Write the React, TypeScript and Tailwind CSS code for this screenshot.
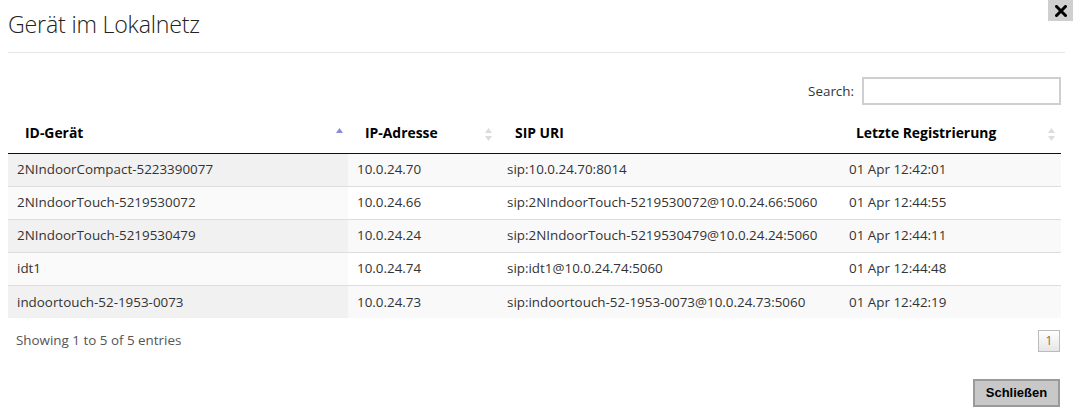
import React from "react";

const rows = [
  ["2NIndoorCompact-5223390077", "10.0.24.70", "sip:10.0.24.70:8014", "01 Apr 12:42:01"],
  ["2NIndoorTouch-5219530072", "10.0.24.66", "sip:2NIndoorTouch-5219530072@10.0.24.66:5060", "01 Apr 12:44:55"],
  ["2NIndoorTouch-5219530479", "10.0.24.24", "sip:2NIndoorTouch-5219530479@10.0.24.24:5060", "01 Apr 12:44:11"],
  ["idt1", "10.0.24.74", "sip:idt1@10.0.24.74:5060", "01 Apr 12:44:48"],
  ["indoortouch-52-1953-0073", "10.0.24.73", "sip:indoortouch-52-1953-0073@10.0.24.73:5060", "01 Apr 12:42:19"],
];

function SortBoth() {
  return (
    <svg width="7" height="13" viewBox="0 0 7 13" className="absolute right-[6px] top-[13px]">
      <path d="M3.5 0 L7 5 L0 5 Z" fill="#dcdcdc" />
      <path d="M3.5 13 L7 8 L0 8 Z" fill="#dcdcdc" />
    </svg>
  );
}

function SortAsc() {
  return (
    <svg width="7" height="13" viewBox="0 0 7 13" className="absolute right-[5px] top-[13px]">
      <path d="M3.5 0 L7 5 L0 5 Z" fill="#8a8ad6" />
    </svg>
  );
}

export default function App() {
  return (
    <div
      className="relative w-[1073px] h-[410px] bg-white text-[#333]"
      style={{ fontFamily: '"Open Sans", "Noto Sans", sans-serif' }}
    >
      <div className="absolute right-0 top-0 w-[25px] h-[21px] bg-[#cfcfcf] flex items-center justify-center">
        <svg width="12" height="12" viewBox="0 0 12 12">
          <path d="M1.5 1.5 L10.5 10.5 M10.5 1.5 L1.5 10.5" stroke="#000" strokeWidth="3" strokeLinecap="square" />
        </svg>
      </div>
      <div className="px-[8px]">
        <div className="h-[53px] border-b border-[#e5e5e5] flex items-center">
          <h1 className="text-[23.2px] font-light text-[#222] leading-none mt-[-3px] tracking-[-0.2px]">Gerät im Lokalnetz</h1>
        </div>
        <div className="w-[1053px]">
          <div className="flex justify-end items-center h-[52px] pt-[24px] mb-[10px]">
            <span className="text-[13.4px] text-[#333] mr-[8px]">Search:</span>
            <input className="w-[199px] h-[28px] border-2 border-[#cfcfcf] outline-none" />
          </div>
          <table className="w-[1053px] border-collapse text-[13.4px] table-fixed">
            <colgroup>
              <col className="w-[340px]" />
              <col className="w-[150px]" />
              <col className="w-[341px]" />
              <col className="w-[222px]" />
            </colgroup>
            <thead>
              <tr className="h-[38px] border-b border-[#111] text-[13.9px]">
                <th className="relative text-left pl-[17px] font-bold text-black">ID-Gerät<SortAsc /></th>
                <th className="relative text-left pl-[17px] font-bold text-black">IP-Adresse<SortBoth /></th>
                <th className="relative text-left pl-[17px] font-bold text-black">SIP URI</th>
                <th className="relative text-left pl-[17px] font-bold text-black">Letzte Registrierung<SortBoth /></th>
              </tr>
            </thead>
            <tbody>
              {rows.map((r, i) => {
                const odd = i % 2 === 0;
                return (
                  <tr key={i} className={`h-[33px] ${i > 0 ? "border-t border-[#ddd]" : ""} ${odd ? "bg-[#f9f9f9]" : "bg-white"}`}>
                    <td className={`pl-[9px] ${odd ? "bg-[#f1f1f1]" : "bg-[#fafafa]"}`}>{r[0]}</td>
                    <td className="pl-[9px]">{r[1]}</td>
                    <td className="pl-[9px]">{r[2]}</td>
                    <td className="pl-[10px]">{r[3]}</td>
                  </tr>
                );
              })}
            </tbody>
          </table>
          <div className="flex justify-between items-center h-[43px] pt-[2px]">
            <span className="text-[13.4px] text-[#555] pl-[8px]">Showing 1 to 5 of 5 entries</span>
            <span className="w-[22px] h-[22px] border border-[#bbb] bg-gradient-to-b from-white to-[#e6e6e6] flex items-center justify-center text-[12px] text-[#8a6a4a] mr-[1px]">1</span>
          </div>
        </div>
      </div>
      <div className="absolute right-[13px] top-[379px]">
        <button
          className="w-[87px] h-[28px] bg-[#c8c8c8] border-2 border-[#9a9a9a] text-[13px] font-bold text-black"
          style={{ fontFamily: '"Liberation Sans", Arial, sans-serif' }}
        >
          Schließen
        </button>
      </div>
    </div>
  );
}
